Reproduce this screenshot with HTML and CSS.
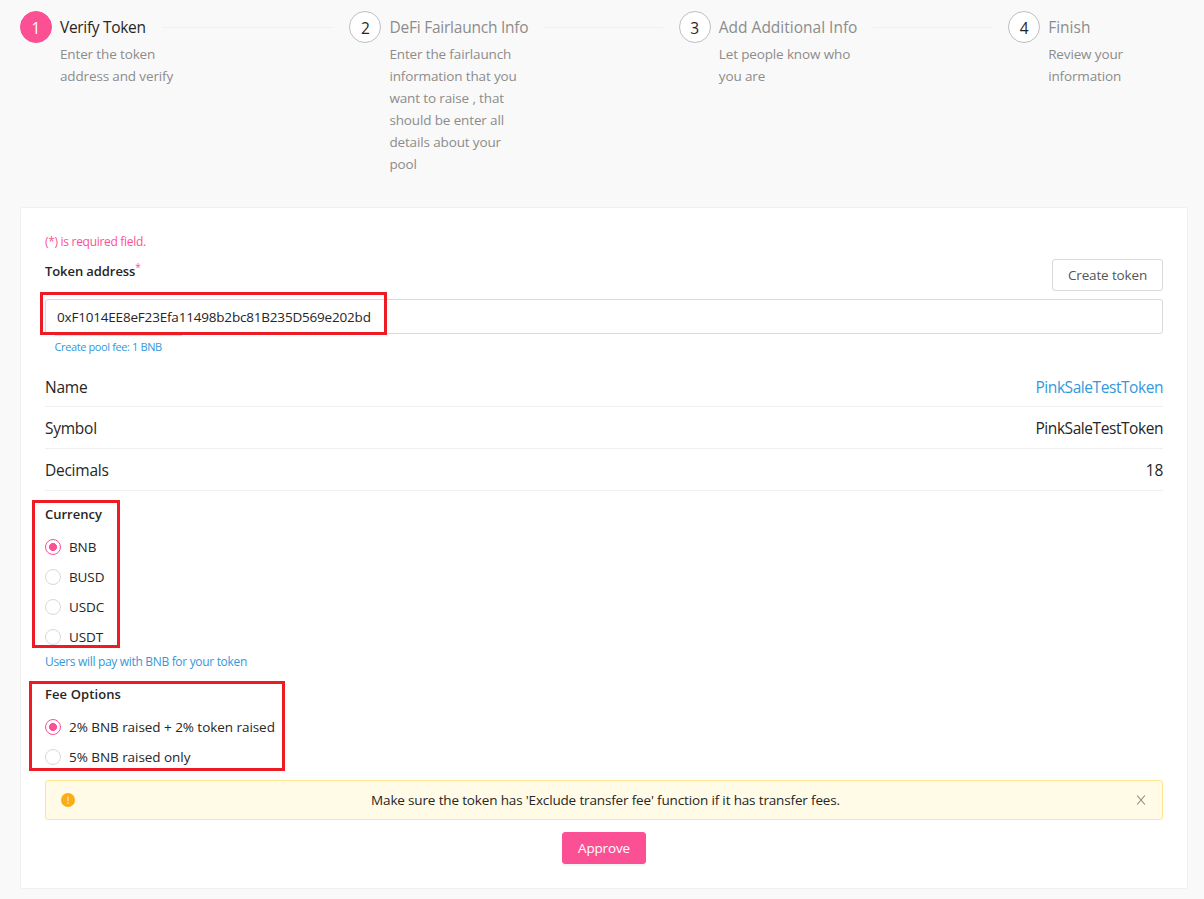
FILE: index.html
```
<!DOCTYPE html>
<html lang="en">
<head>
<meta charset="utf-8">
<title>Create DeFi Fairlaunch</title>
<link rel="stylesheet" href="styles.css">
</head>
<body>
<main class="page">
  <section class="steps">
    <div class="step active">
      <div class="step-icon">1</div>
      <div class="step-body"><div class="step-head"><span class="step-title t1">Verify Token</span></div><p class="step-desc">Enter the token<br>address and verify</p></div>
    </div>
    <div class="step">
      <div class="step-icon">2</div>
      <div class="step-body"><div class="step-head"><span class="step-title t2">DeFi Fairlaunch Info</span></div><p class="step-desc">Enter the fairlaunch<br>information that you<br>want to raise , that<br>should be enter all<br>details about your<br>pool</p></div>
    </div>
    <div class="step">
      <div class="step-icon">3</div>
      <div class="step-body"><div class="step-head"><span class="step-title t3">Add Additional Info</span></div><p class="step-desc">Let people know who<br>you are</p></div>
    </div>
    <div class="step last">
      <div class="step-icon">4</div>
      <div class="step-body"><div class="step-head"><span class="step-title t4">Finish</span></div><p class="step-desc">Review your<br>information</p></div>
    </div>
  </section>

  <section class="card">
    <p class="required">(*) is required field.</p>
    <div class="label-row">
      <label class="label token-label">Token address<sup class="star">*</sup></label>
      <button class="btn">Create token</button>
    </div>
    <div class="input-wrap">
      <div class="input"><span class="address">0xF1014EE8eF23Efa11498b2bc81B235D569e202bd</span></div>
      <div class="mark mark-address"></div>
    </div>
    <p class="pool-fee">Create pool fee: 1 BNB</p>
    <div class="row first"><span>Name</span><a class="value row-link">PinkSaleTestToken</a></div>
    <div class="row"><span>Symbol</span><span class="value">PinkSaleTestToken</span></div>
    <div class="row"><span>Decimals</span><span>18</span></div>

    <div class="group currency">
      <div class="label">Currency</div>
      <div class="radios">
        <label class="radio on"><i class="dot"></i>BNB</label>
        <label class="radio"><i class="dot"></i>BUSD</label>
        <label class="radio"><i class="dot"></i>USDC</label>
        <label class="radio"><i class="dot"></i>USDT</label>
      </div>
      <div class="mark mark-currency"></div>
    </div>
    <p class="hint">Users will pay with BNB for your token</p>
    <div class="group fees">
      <div class="label fee-label">Fee Options</div>
      <div class="radios">
        <label class="radio on fee"><i class="dot"></i>2% BNB raised + 2% token raised</label>
        <label class="radio fee"><i class="dot"></i>5% BNB raised only</label>
      </div>
      <div class="mark mark-fees"></div>
    </div>

    <div class="alert">
      <svg class="alert-icon" viewBox="0 0 14 14"><circle cx="7" cy="7" r="7" fill="#faad14"/><path d="M6.5 3.4h1v4.7h-1z" fill="#fff6dd"/><circle cx="7" cy="10" r=".75" fill="#fff6dd"/></svg>
      <span class="alert-text">Make sure the token has 'Exclude transfer fee' function if it has transfer fees.</span>
      <svg class="alert-close" viewBox="0 0 10 10"><path d="M1.1.5 8.9 9.5M8.9.5 1.1 9.5" stroke="#8b887d" stroke-width="1.1" fill="none"/></svg>
    </div>
    <div class="actions"><button class="btn primary">Approve</button></div>
  </section>
</main>
</body>
</html>
```
FILE: styles.css
```
* { box-sizing: border-box; }
body {
  margin: 0;
  background: #f9f9f9;
  color: #262626;
  font: 14px/22px "Open Sans", "Noto Sans", sans-serif;
}
p { margin: 0; }
.page { padding: 11px 16px 10px 20px; height: 899px; overflow: hidden; }

.steps { display: grid; grid-template-columns: repeat(3, 329.4px) 1fr; height: 196px; }
.step { display: flex; gap: 8px; padding-right: 16px; color: #8c8c8c; }
.step-icon {
  flex: none; width: 32px; height: 32px; border-radius: 50%;
  border: 1px solid #bfbfbf; background: #fff; color: #262626;
  font-size: 15.5px; line-height: 32px; text-align: center;
}
.active .step-icon { background: #fb5194; border-color: #fb5194; color: #fff; }
.step-body { flex: 1; }
.step-head { display: flex; align-items: center; gap: 16px; height: 32px; }
.step-head::after { content: ""; flex: 1; height: 1px; background: #f0f0f0; }
.last .step-head::after { display: none; }
.step-title { font-size: 15.5px; white-space: nowrap; }
.t1 { letter-spacing: -.32px; }
.t2 { letter-spacing: -.23px; }
.active .step-title { color: #262626; }
.step-desc { font-size: 13.5px; letter-spacing: -.14px; white-space: nowrap; }

.card {
  width: 1168px; height: 682px; padding: 24px;
  background: #fff; border: 1px solid #f0f0f0; border-radius: 3px;
}
.required { font-size: 12px; height: 20px; line-height: 20px; letter-spacing: -.3px; color: #fb5194; }
.label-row { display: flex; justify-content: space-between; height: 47px; }
.label { font-size: 13px; font-weight: 600; line-height: 22px; }
.token-label { padding-top: 8px; letter-spacing: -.08px; }
.fee-label { letter-spacing: .1px; }
.star { font-size: 10px; font-weight: 400; line-height: 0; color: #fb5194; }
.btn {
  height: 32px; margin-top: 7px; width: 111px; padding: 0;
  background: #fff; border: 1px solid #d9d9d9; border-radius: 3px;
  font: 13.5px "Open Sans", sans-serif; letter-spacing: -.15px; color: #555;
}
.input-wrap { position: relative; height: 35px; }
.input { height: 35px; padding: 0 11px; border: 1px solid #d9d9d9; border-radius: 3px; line-height: 34px; font-size: 13.5px; }
.address { letter-spacing: -.19px; }
.pool-fee { padding-left: 9.5px; font-size: 11px; letter-spacing: -.38px; height: 33px; line-height: 26px; color: #3498db; }
.row {
  display: flex; justify-content: space-between; align-items: center;
  height: 42px; border-bottom: 1px solid #f0f0f0; font-size: 15.5px; letter-spacing: -.25px;
}
.first { height: 40px; }
.value { letter-spacing: -.44px; }
.row-link { color: #3498db; }
.group { position: relative; }
.currency { padding-top: 12px; }
.radios { padding-top: 7px; }
.radio { display: flex; align-items: center; gap: 8px; height: 30px; font-size: 13.5px; letter-spacing: -.1px; }
.fee { letter-spacing: -.05px; }
.dot { width: 16px; height: 16px; border: 1px solid #d9d9d9; border-radius: 50%; background: #fff; }
.on .dot { border-color: #fb5194; background: radial-gradient(circle, #fb5194 3.7px, #fff 4.3px); }
.hint { font-size: 12px; height: 31px; line-height: 20px; letter-spacing: -.32px; color: #3498db; }
.alert {
  display: flex; align-items: center; height: 40px; margin-top: 8px; padding: 0 16px 0 15px;
  background: #fffbe6; border: 1px solid #ffe58f; border-radius: 3px;
}
.alert-icon { width: 14px; height: 14px; }
.alert-text { flex: 1; text-align: center; font-size: 13.5px; letter-spacing: -.155px; }
.alert-close { width: 10px; height: 10px; }
.actions { display: flex; justify-content: center; padding-top: 12px; }
.primary { width: 84px; margin: 0; background: #fb5194; border-color: #fb5194; color: #fff; box-shadow: 0 2px 0 rgba(0,0,0,.045); }

/* red highlight frames drawn over the form */
.mark { position: absolute; border: 3px solid #ed1c24; }
.mark-address { left: -5px; top: -7px; width: 347px; height: 43px; }
.mark-address::after { content: ""; position: absolute; left: 12px; top: 40px; width: 127px; height: 1px; background: #e2dede; }
.mark-currency { left: -13px; top: 9px; width: 88px; height: 148px; }
.mark-fees { left: -16px; top: -2px; width: 256px; height: 90px; }
```
